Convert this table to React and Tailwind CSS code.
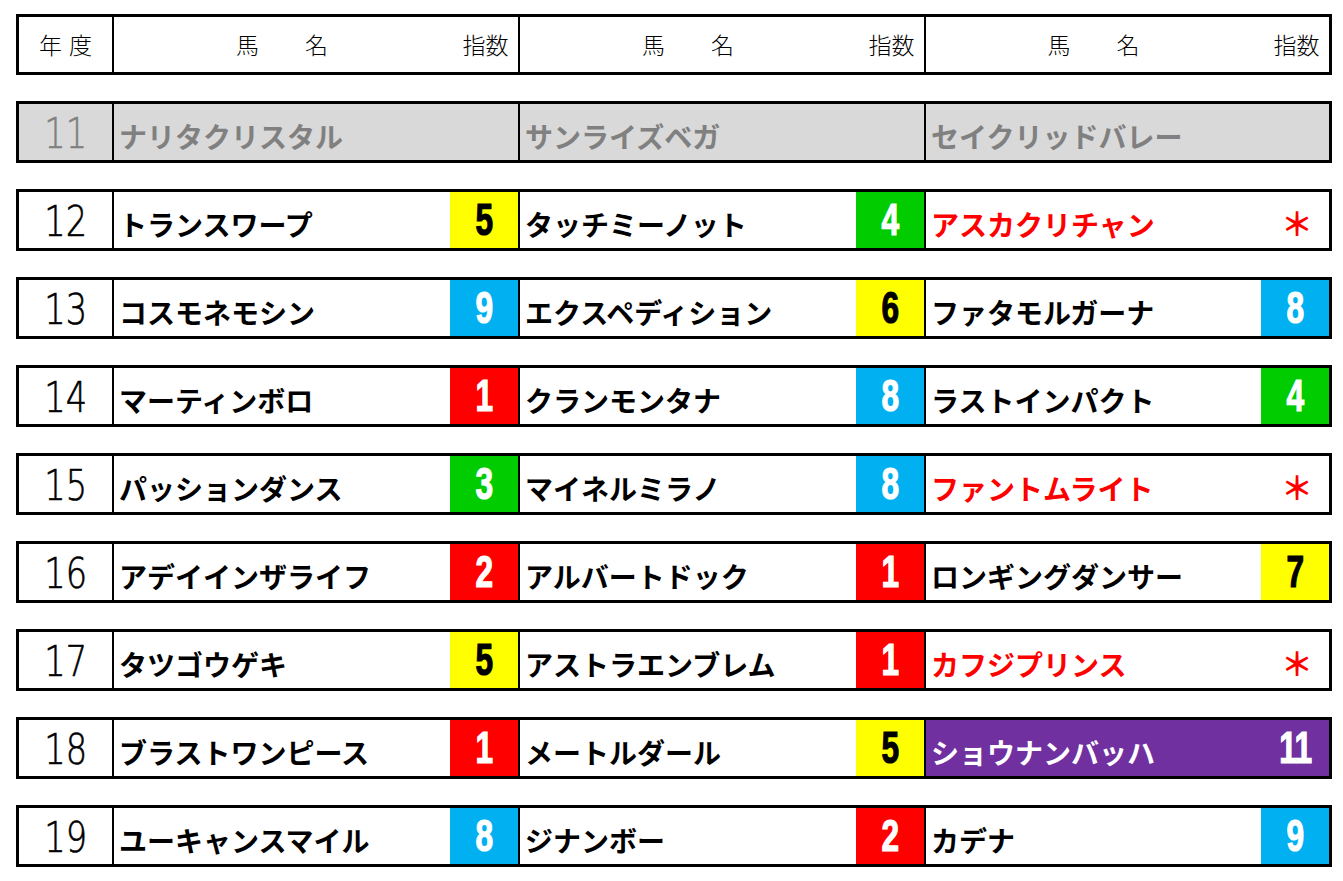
import React from 'react'

const BG = {
  y: 'bg-[#ffff00] text-black',
  b: 'bg-[#00b0f0] text-white',
  r: 'bg-[#ff0000] text-white',
  g: 'bg-[#00cc00] text-white',
}

const rows = [
  { year: '11', gray: true, cells: [['ナリタクリスタル'], ['サンライズベガ'], ['セイクリッドバレー']] },
  { year: '12', cells: [['トランスワープ', '5', 'y'], ['タッチミーノット', '4', 'g'], ['アスカクリチャン', '*', 'star']] },
  { year: '13', cells: [['コスモネモシン', '9', 'b'], ['エクスペディション', '6', 'y'], ['ファタモルガーナ', '8', 'b']] },
  { year: '14', cells: [['マーティンボロ', '1', 'r'], ['クランモンタナ', '8', 'b'], ['ラストインパクト', '4', 'g']] },
  { year: '15', cells: [['パッションダンス', '3', 'g'], ['マイネルミラノ', '8', 'b'], ['ファントムライト', '*', 'star']] },
  { year: '16', cells: [['アデイインザライフ', '2', 'r'], ['アルバートドック', '1', 'r'], ['ロンギングダンサー', '7', 'y']] },
  { year: '17', cells: [['タツゴウゲキ', '5', 'y'], ['アストラエンブレム', '1', 'r'], ['カフジプリンス', '*', 'star']] },
  { year: '18', cells: [['ブラストワンピース', '1', 'r'], ['メートルダール', '5', 'y'], ['ショウナンバッハ', '11', 'purple']] },
  { year: '19', cells: [['ユーキャンスマイル', '8', 'b'], ['ジナンボー', '2', 'r'], ['カデナ', '9', 'b']] },
]

const jp = { fontFamily: '"Noto Sans CJK JP", "Noto Sans", sans-serif' }
const num = { fontFamily: '"Liberation Sans", Arial, sans-serif' }
const thin = { fontFamily: '"DejaVu Sans", sans-serif' }

// year column has 2px right border, other columns carry their own left border
const widths = ['w-[404px]', 'w-[406px] border-l-2 border-black', 'w-[405px] border-l-2 border-black']
const headWidths = ['w-[406px]', 'w-[406px]', 'w-[405px]']

function Cell({ cell, gray, i }) {
  const [name, val, kind] = cell
  const purple = kind === 'purple'
  const star = kind === 'star'
  let nameColor = 'text-black'
  if (gray) nameColor = 'text-[#808080]'
  if (star) nameColor = 'text-[#ff0000]'
  if (purple) nameColor = 'text-white'
  return (
    <div className={`${widths[i]} h-full flex ${purple ? 'bg-[#7030a0]' : ''}`}>
      <div className={`flex-1 flex items-center pl-[5px] pt-[7px] text-[28px] font-bold leading-none ${nameColor}`} style={jp}>
        {name}
      </div>
      {val && (
        <div
          className={`w-[68px] h-full flex items-center justify-center ${star ? 'text-[#ff0000]' : purple ? 'text-white' : BG[kind]}`}
        >
          {star ? (
            <span className="text-[32px] font-bold leading-none pt-[4px] pl-[4px]" style={jp}>＊</span>
          ) : (
            <span
              className={`inline-block text-[44px] font-bold leading-none scale-x-[0.72] [-webkit-text-stroke:1.2px_currentColor] ${val.length > 1 ? 'tracking-[-1px]' : ''}`}
              style={num}
            >
              {val}
            </span>
          )}
        </div>
      )}
    </div>
  )
}

export default function App() {
  return (
    <div className="bg-white w-[1343px] h-[881px] pl-[16px] pt-[14px] flex flex-col gap-[26px]">
      {/* header */}
      <div className="w-[1316px] h-[61px] border-[3px] border-black flex text-[23px] text-black font-light" style={jp}>
        <div className="w-[93px] h-full flex items-center justify-center gap-[7px]">
          <span>年</span>
          <span>度</span>
        </div>
        {headWidths.map((w, i) => (
          <div key={i} className={`${w} h-full flex border-l-2 border-black`}>
            <div className="flex-1 flex items-center justify-center">馬　　名</div>
            <div className="w-[68px] flex items-center justify-center pl-[3px]">指数</div>
          </div>
        ))}
      </div>

      {rows.map((r) => (
        <div key={r.year} className={`w-[1316px] h-[62px] border-[3px] border-black flex ${r.gray ? 'bg-[#d9d9d9]' : ''}`}>
          <div
            className={`w-[95px] h-full flex items-center justify-center pt-[3px] text-[42px] font-extralight leading-none border-r-2 border-black ${r.gray ? 'text-[#808080]' : 'text-black'}`}
            style={thin}
          >
            <span className="inline-block scale-x-[0.8] [-webkit-text-stroke:0.6px_currentColor]">{r.year}</span>
          </div>
          {r.cells.map((c, i) => (
            <Cell key={i} cell={c} gray={r.gray} i={i} />
          ))}
        </div>
      ))}
    </div>
  )
}
